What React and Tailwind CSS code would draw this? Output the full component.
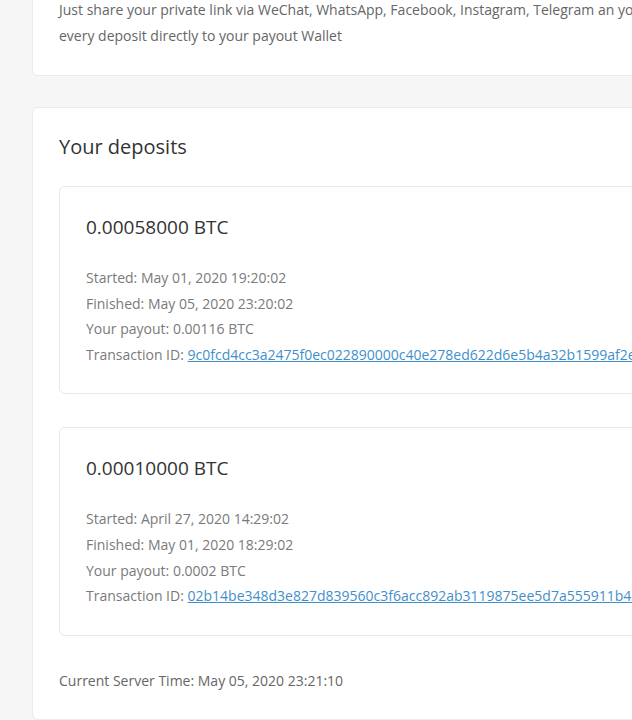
import React from "react";

const deposits = [
  {
    amount: "0.00058000 BTC",
    started: "May 01, 2020 19:20:02",
    finished: "May 05, 2020 23:20:02",
    payout: "0.00116 BTC",
    tx: "9c0fcd4cc3a2475f0ec022890000c40e278ed622d6e5b4a32b1599af2e1d0c7a",
  },
  {
    amount: "0.00010000 BTC",
    started: "April 27, 2020 14:29:02",
    finished: "May 01, 2020 18:29:02",
    payout: "0.0002 BTC",
    tx: "02b14be348d3e827d839560c3f6acc892ab3119875ee5d7a555911b42c80e1f3",
  },
];

const DepositCard = ({ d }) => (
  <div className="bg-white border border-[#e9e9e9] rounded-[6px] pl-[26px] pt-[26px] pb-[26px]">
    <div className="text-[19px] leading-[28px] text-[#333]">{d.amount}</div>
    <div className="mt-[24px] text-[14px] leading-[25.6px] text-[#7a7a7a]">
      <div>Started: {d.started}</div>
      <div>Finished: {d.finished}</div>
      <div>Your payout: {d.payout}</div>
      <div className="whitespace-nowrap">
        Transaction ID:{" "}
        <a href="#" className="text-[#3f8fcb] underline">
          {d.tx}
        </a>
      </div>
    </div>
  </div>
);

export default function App() {
  return (
    <div
      className="w-[632px] h-[720px] overflow-hidden bg-[#f6f6f6]"
      style={{ fontFamily: '"Open Sans", sans-serif' }}
    >
      <div className="w-[760px] pl-[32px]">
        {/* intro card */}
        <div className="bg-white border border-[#ebebeb] rounded-[6px] -mt-[30px] pl-[26px] pt-[26px] pb-[26px]">
          <p className="text-[14px] leading-[26px] text-[#666]">
            <span className="block whitespace-nowrap">
              Just share your private link via WeChat, WhatsApp, Facebook, Instagram, Telegram an your friends to receive
            </span>
            <span className="block">every deposit directly to your payout Wallet</span>
          </p>
        </div>

        {/* deposits */}
        <div className="mt-[31px] bg-white border border-[#ebebeb] rounded-[6px] pl-[26px] pt-[25px] pb-[25px]">
          <h2 className="text-[20px] leading-[28px] text-[#333]">Your deposits</h2>
          <div className="mt-[25px] flex flex-col gap-[33px]">
            {deposits.map((d) => (
              <DepositCard key={d.tx} d={d} />
            ))}
          </div>
          <div className="mt-[32px] text-[14px] leading-[26px] text-[#666]">
            Current Server Time: May 05, 2020 23:21:10
          </div>
        </div>
      </div>
    </div>
  );
}
